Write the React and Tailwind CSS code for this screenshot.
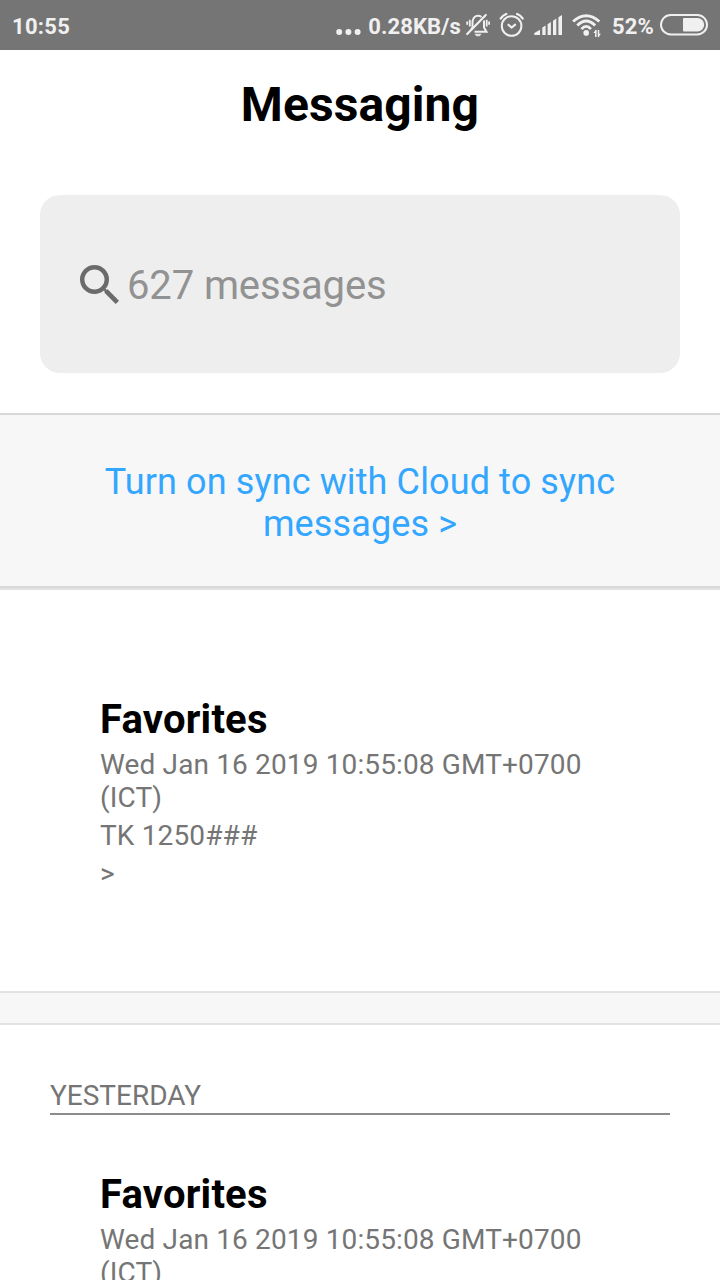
function MutedBell() {
  return (
    <svg className="ml-[4px] h-[26px] w-[26px] shrink-0" viewBox="0 0 26 26" fill="none" stroke="#f0f0f0" strokeWidth="2">
      <path d="M7.5 15.5V9.5Q8.5 3.8 13 3.8Q15 3.8 16.5 5M19 8.5V15.5L21.5 19.8H9.5M7.5 15.5L5.8 18" />
      <path d="M10 22.2H16L14.5 23.8H11.5Z" fill="#f0f0f0" strokeWidth="0.8" />
      <path d="M2.2 22L20.8 3" strokeWidth="2.2" strokeLinecap="round" />
      <path d="M4.8 7.8V14.5M2.2 9.5V12.8M21.7 7.8V14.5M24.1 9.5V12.8" strokeWidth="1.8" />
    </svg>
  );
}

function AlarmClock() {
  return (
    <svg className="ml-[8px] h-[26px] w-[26px] shrink-0" viewBox="0 0 26 26" fill="none" stroke="#f0f0f0" strokeWidth="2">
      <circle cx="12.6" cy="14" r="9.8" />
      <path d="M8.8 12.2L12.6 15.6L16.8 12.2" strokeWidth="2.2" />
      <path d="M1.8 6.4Q3.8 3.4 7.2 2M18.2 2Q21.6 3.4 23.6 6.4" strokeWidth="2.4" strokeLinecap="round" />
    </svg>
  );
}

function SignalBars() {
  return (
    <svg className="ml-[9px] h-[22px] w-[29px] shrink-0" viewBox="0 0 29 22" fill="#f0f0f0">
      <path d="M0.3 21V19L6 15.7V21ZM8.3 21V13.6L11.6 11.5V21ZM13.6 21V10.2L16.9 8V21ZM19 21V6.7L22.3 4.5V21ZM24.4 21V3.2L28 1V21Z" />
    </svg>
  );
}

function Wifi() {
  return (
    <svg className="ml-[8px] h-[26px] w-[32px] shrink-0" viewBox="0 0 32 26" fill="none" stroke="#f0f0f0" strokeWidth="2.9">
      <path d="M2.1 9.5Q15.2 -2 28.3 9.5M6.3 13.5Q15.2 4.4 24.1 13.5M10.5 17.1Q15.2 11.6 19.9 17.1" />
      <circle cx="15.2" cy="20.9" r="2.8" fill="#f0f0f0" stroke="none" />
      <path d="M24.8 25V18M27.5 18V25" strokeWidth="1.5" />
      <path d="M22.3 21L25.2 17.6V21ZM27 21.8H30L27 25.2Z" fill="#f0f0f0" stroke="none" />
    </svg>
  );
}

function Battery() {
  return (
    <svg className="ml-[6px] h-[22px] w-[48px] shrink-0" viewBox="0 0 48 22" fill="none">
      <rect x="1" y="1" width="46" height="19.4" rx="9.7" stroke="#f0f0f0" strokeWidth="2" />
      <path d="M24 4H37.5A6.7 6.7 0 0 1 37.5 17.4H24A1 1 0 0 1 23 16.4V5A1 1 0 0 1 24 4Z" fill="#f0f0f0" />
    </svg>
  );
}

function StatusBar() {
  return (
    <header className="flex h-[50px] items-center bg-[#757575] px-[12px] text-[22px] leading-[26px] font-bold text-[#f0f0f0]">
      <span className="pt-[3px] tracking-[0.3px]">10:55</span>
      <div className="ml-auto flex items-center">
        <svg className="mt-[13px] mr-[7px] h-[6px] w-[25px]" viewBox="0 0 25 6" fill="#f0f0f0">
          <circle cx="3.2" cy="3" r="3" />
          <circle cx="12.4" cy="3" r="3" />
          <circle cx="21.6" cy="3" r="3" />
        </svg>
        <span className="pt-[3px] tracking-[0.1px]">0.28KB/s</span>
        <MutedBell />
        <AlarmClock />
        <SignalBars />
        <Wifi />
        <span className="ml-[9px] pt-[3px] tracking-[0.2px]">52%</span>
        <Battery />
      </div>
    </header>
  );
}

function Message() {
  return (
    <article className="px-[100px]">
      <h2 className="text-[40px] leading-[54px] font-bold tracking-[0.2px] text-black">Favorites</h2>
      <div className="mt-px flex flex-col gap-[5px] text-[28px] leading-[33px] tracking-[0.14px] text-[#757575]">
        <p>Wed Jan 16 2019 10:55:08 GMT+0700 (ICT)</p>
        <p>TK 1250###</p>
        <p>&gt;</p>
      </div>
    </article>
  );
}

export default function App() {
  return (
    <div className="h-[1280px] w-[720px] overflow-hidden bg-white font-[Roboto,sans-serif]">
      <StatusBar />
      <h1 className="pt-[27px] text-center text-[48px] leading-[56px] font-bold tracking-[0.1px] text-black">Messaging</h1>
      <div className="mx-[40px] mt-[62px] flex h-[178px] items-center rounded-[20px] bg-[#eeeeee] pl-[40px]">
        <svg className="h-[39px] w-[39px]" viewBox="3 3 17.49 17.49" fill="#6b6b6b">
          <path d="M15.5 14h-.79l-.28-.27A6.471 6.471 0 0 0 16 9.5 6.5 6.5 0 1 0 9.5 16c1.61 0 3.09-.59 4.23-1.57l.27.28v.79l5 4.99L20.49 19l-4.99-5zm-6 0C7.01 14 5 11.99 5 9.5S7.01 5 9.5 5 14 7.01 14 9.5 11.99 14 9.5 14z" />
        </svg>
        <span className="ml-[8px] pt-[2px] text-[40px] leading-[47px] tracking-[-0.12px] text-[#929292]">627 messages</span>
      </div>
      <div className="mt-[40px] h-[175px] border-y-2 border-[#d8d8d8] bg-[#f7f7f7] px-[80px] pt-[46px] text-center text-[36px] leading-[42px] tracking-[0.12px] text-[#33a6ff]">
        Turn on sync with Cloud to sync messages &gt;
      </div>
      <section className="h-[403px] border-t-2 border-[#e2e2e2] pt-[103px]">
        <Message />
      </section>
      <div className="h-[34px] border-y-2 border-[#e2e2e2] bg-[#f7f7f7]" />
      <section className="pt-[54px]">
        <h3 className="mx-[50px] h-[36px] border-b-2 border-[#8c8c8c] text-[28px] leading-[33px] text-[#757575]">YESTERDAY</h3>
        <div className="pt-[53px]">
          <Message />
        </div>
      </section>
    </div>
  );
}
